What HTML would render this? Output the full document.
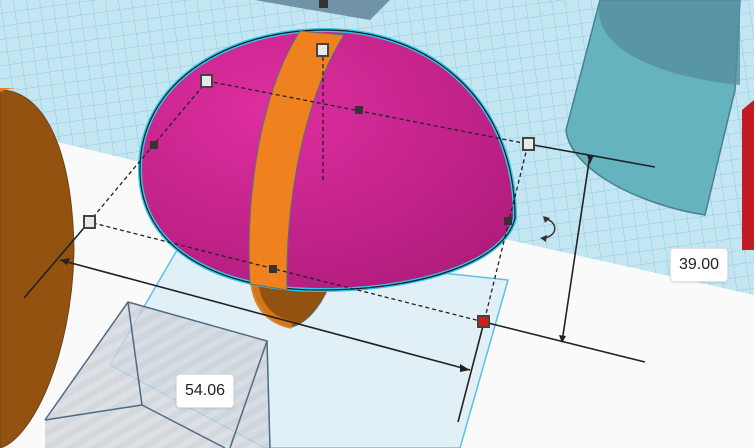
<!DOCTYPE html>
<html><head><meta charset="utf-8"><style>
html,body{margin:0;padding:0;width:754px;height:448px;overflow:hidden;background:#fafafa;font-family:"Liberation Sans",sans-serif}
.lbl{position:absolute;background:#fff;border:1px solid #e2e2e2;border-radius:4px;font-size:16px;color:#222;padding:0 8px;height:32px;line-height:32px;box-shadow:0 1px 2px rgba(0,0,0,.1)}
</style></head><body>
<svg width="754" height="448" viewBox="0 0 754 448" style="position:absolute;left:0;top:0">
<defs>
<pattern id="g" width="13" height="13" patternUnits="userSpaceOnUse" patternTransform="rotate(-8)">
<rect width="13" height="13" fill="#c3e6f2"/>
<path d="M0 0H13M0 0V13" stroke="#8fcbe0" stroke-width="1"/>
</pattern>
<radialGradient id="eg" cx="0.35" cy="0.3" r="0.8">
<stop offset="0" stop-color="#de2e9f"/><stop offset="1" stop-color="#b01c7c"/>
</radialGradient>
<pattern id="st" width="12" height="12" patternUnits="userSpaceOnUse" patternTransform="rotate(-30)">
<rect width="12" height="12" fill="#d4d8de"/><rect width="12" height="6" fill="#c9cfd6"/>
</pattern>
</defs>
<rect width="754" height="448" fill="#fafafa"/>
<polygon points="0,0 754,0 754,295 500,238 140,162 0,128" fill="url(#g)"/>
<polygon points="255,0 390,0 370,20 300,8" fill="#5d7e95" opacity=".8"/>
<rect x="319" y="0" width="9" height="8" fill="#333"/>
<path d="M600,0 L740,0 L735,90 L705,215 C640,205 570,170 566,130 Z" fill="#64b3bf" stroke="#4a7f93" stroke-width="1.5"/>
<path d="M600,0 C590,40 640,75 740,85 L740,0Z" fill="#558f9f" opacity=".8"/>
<polygon points="742,110 754,100 754,250 742,250" fill="#c21b24"/>
<path d="M0,90 C40,90 72,140 74,250 C72,360 30,440 0,448 Z" fill="#93520f" stroke="#6b4420" stroke-width="1"/>
<path d="M0,88 L20,88 C10,88 5,90 0,92Z" fill="#e08020"/>
<polygon points="110,365 180,245 508,280 460,448 265,448" fill="#dff0f7" opacity=".9" stroke="#49bde4" stroke-width="1.5"/>
<polygon points="128,302 267,341 270,448 45,448 45,420" fill="url(#st)" opacity=".8"/>
<polyline points="45,420 128,302 267,341 270,448" fill="none" stroke="#4f6a82" stroke-width="1.5"/>
<polyline points="128,302 142,405 45,420" fill="none" stroke="#4f6a82" stroke-width="1.5"/>
<line x1="142" y1="405" x2="225" y2="448" stroke="#4f6a82" stroke-width="1.5"/>
<line x1="267" y1="341" x2="230" y2="448" stroke="#4f6a82" stroke-width="1.5"/>
<path d="M250,270 C252,300 265,322 292,327 C310,322 325,300 332,278 Z" fill="#93520f" stroke="#5a6e80" stroke-width="1"/>
<path d="M254,280 C256,305 268,320 292,325" fill="none" stroke="#d97a1a" stroke-width="8" opacity=".9"/>
<path d="M140,170 C140,80 230,30 325,30 C430,30 515,100 515,218 C505,262 420,290 320,290 C220,290 140,250 140,170Z" fill="url(#eg)" stroke="#2ec6ea" stroke-width="4"/>
<path d="M140,170 C140,80 230,30 325,30 C430,30 515,100 515,218 C505,262 420,290 320,290 C220,290 140,250 140,170Z" fill="none" stroke="#1a1a1a" stroke-width="1.2"/>
<path d="M300,31 L344,35 C312,85 285,180 287,290 L250,284 C245,190 262,90 300,31Z" fill="#ef821f" stroke="#5a6e80" stroke-width="1"/>
<g stroke="#222" stroke-width="1.3" stroke-dasharray="4,3" fill="none">
<polyline points="207,81 528,144 484,322 89,222 207,81"/>
<line x1="323" y1="50" x2="323" y2="180"/>
</g>
<g stroke="#222" stroke-width="1.6" fill="#222">
<line x1="528" y1="144" x2="655" y2="167"/>
<line x1="484" y1="322" x2="645" y2="362"/>
<line x1="590" y1="155" x2="562" y2="342"/>
<line x1="89" y1="222" x2="24" y2="298"/>
<line x1="60" y1="260" x2="470" y2="370"/>
<line x1="484" y1="322" x2="458" y2="422"/>
</g>
<polygon points="587,155 594,155 590,164" fill="#222"/>
<polygon points="559,335 566,336 562,343" fill="#222"/>
<polygon points="60,260 70,258 67,265" fill="#222"/>
<polygon points="470,370 460,364 460,372" fill="#222"/>
<path d="M546,219 C558,222 558,236 544,238" fill="none" stroke="#333" stroke-width="1.5"/>
<polygon points="543,216 550,218 545,223" fill="#333"/>
<polygon points="540,238 547,235 546,242" fill="#333"/>
<g stroke="#444" stroke-width="2" fill="#e8e8e8">
<rect x="317" y="44" width="11" height="12"/>
<rect x="201" y="75" width="11" height="12"/>
<rect x="523" y="138" width="11" height="12"/>
<rect x="84" y="216" width="11" height="12"/>
</g>
<g fill="#333">
<rect x="355" y="106" width="8" height="8"/>
<rect x="150" y="141" width="8" height="8"/>
<rect x="504" y="217" width="8" height="8"/>
<rect x="269" y="265" width="8" height="8"/>
</g>
<rect x="478" y="316" width="11" height="11" fill="#d81c14" stroke="#444" stroke-width="2"/>
</svg>
<div class="lbl" style="left:176px;top:374px">54.06</div>
<div class="lbl" style="left:670px;top:248px">39.00</div>
</body></html>
